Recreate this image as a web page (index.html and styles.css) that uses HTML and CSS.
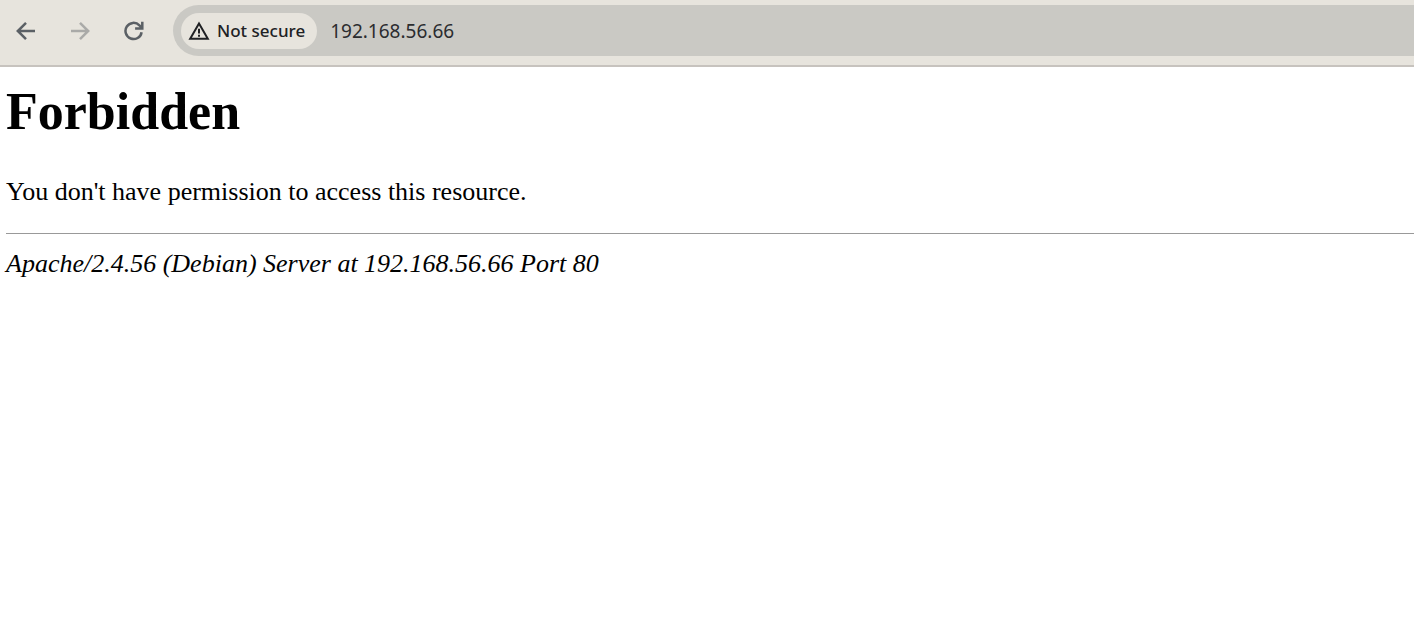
FILE: index.html
```html
<!DOCTYPE html>
<html lang="en">
<head>
<meta charset="utf-8">
<meta name="viewport" content="width=device-width, initial-scale=1">
<title>403 Forbidden</title>
<link rel="stylesheet" href="styles.css">
</head>
<body>
<header class="toolbar">
  <nav class="nav-buttons" aria-label="Browser navigation">
    <button class="nav-button" type="button" aria-label="Back">
      <svg class="icon" viewBox="0 0 20 20"><path d="M19 10H2M10 1.8 1.8 10l8.2 8.2"/></svg>
    </button>
    <button class="nav-button" type="button" aria-label="Forward" disabled>
      <svg class="icon" viewBox="0 0 20 20"><path d="M1 10h17M10 1.8l8.2 8.2-8.2 8.2"/></svg>
    </button>
    <button class="nav-button" type="button" aria-label="Reload">
      <svg class="icon" viewBox="0 0 20 20"><path d="M17.6 11.2A8.1 8.1 0 1 1 15.4 4.3L18 7M18.3.8v6.6h-7.2"/></svg>
    </button>
  </nav>
  <div class="omnibox">
    <button class="security-chip" type="button">
      <svg class="warning-icon" viewBox="0 0 22 20"><path class="triangle" d="M11 2.6 2.2 17.7h17.6z"/><path class="mark" d="M11 7.7v4.8M11 13.7v2"/></svg>
      <span>Not secure</span>
    </button>
    <input class="address" type="text" value="192.168.56.66" aria-label="Address" spellcheck="false">
  </div>
</header>
<main class="page">
  <h1 class="title">Forbidden</h1>
  <p class="message">You don't have permission to access this resource.</p>
  <hr class="rule">
  <address class="signature">Apache/2.4.56 (Debian) Server at 192.168.56.66 Port 80</address>
</main>
</body>
</html>
```
FILE: styles.css
```css
* {
  box-sizing: border-box;
}

body {
  margin: 0;
  background: #fff;
  color: #000;
}

.toolbar {
  display: flex;
  align-items: center;
  gap: 23px;
  padding: 5px 0 9px 10px;
  background: #e7e4dd;
  border-bottom: 2px solid #c7c3be;
}

.nav-buttons {
  display: flex;
  gap: 22px;
}

.nav-button {
  display: flex;
  align-items: center;
  justify-content: center;
  width: 32px;
  height: 32px;
  padding: 0;
  border: 0;
  background: none;
  color: #5b6065;
}

.nav-button:disabled {
  color: #aaaaa8;
}

.icon {
  width: 20px;
  height: 20px;
  fill: none;
  stroke: currentColor;
  stroke-width: 2.5;
}

.omnibox {
  display: flex;
  flex: 1;
  align-items: center;
  gap: 13px;
  height: 51px;
  padding-left: 8px;
  border-radius: 26px 0 0 26px;
  background: #cac9c4;
  font-family: "Noto Sans", "Open Sans", sans-serif;
}

.security-chip {
  display: flex;
  flex: none;
  align-items: center;
  gap: 7px;
  height: 36px;
  padding: 0 12px 0 7px;
  border: 0;
  border-radius: 18px;
  background: #e7e4dd;
  color: #202124;
  font: 500 17px/24px "Noto Sans", "Open Sans", sans-serif;
}

.warning-icon {
  width: 22px;
  height: 20px;
  fill: none;
  stroke: currentColor;
}

.triangle {
  stroke-width: 2;
}

.mark {
  stroke-width: 2;
}

.address {
  flex: 1;
  min-width: 0;
  height: 36px;
  padding: 0;
  border: 0;
  outline: 0;
  background: none;
  color: #2b2c2f;
  font: 400 19px/24px "Noto Sans", "Open Sans", sans-serif;
}

.page {
  padding: 15px 0 0 6px;
  font: 26px/30px "Liberation Serif", "Times New Roman", serif;
}

.title {
  margin: 0;
  font-size: 52px;
  line-height: 60px;
}

.message {
  margin: 35px 0 26px;
}

.rule {
  height: 1px;
  margin: 0 0 15px;
  border: 0;
  background: #999;
}

.signature {
  font-style: italic;
}
```
